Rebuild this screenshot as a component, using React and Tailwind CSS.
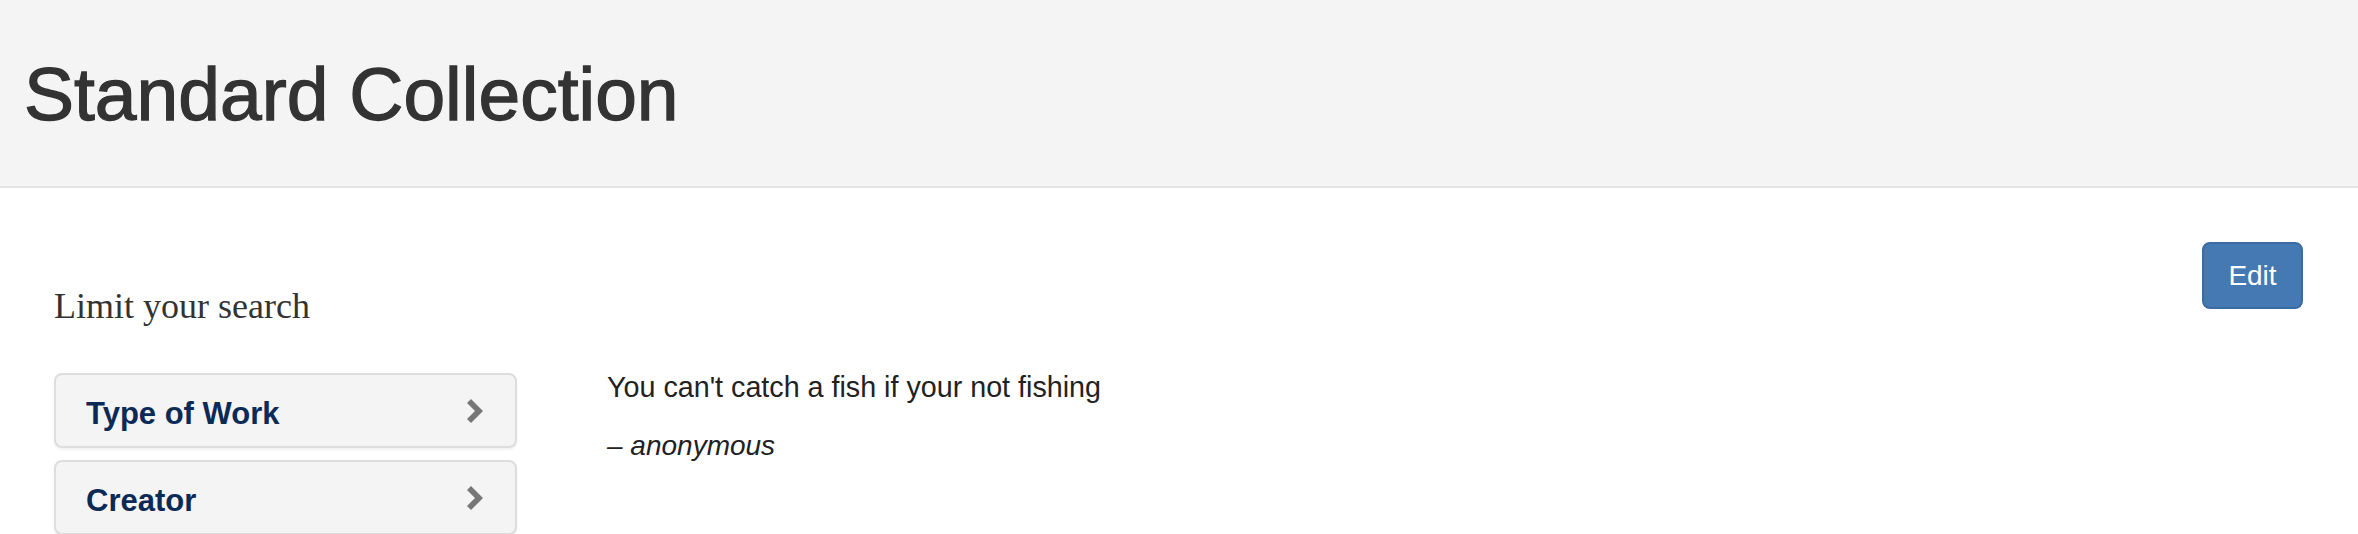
import React from "react";

function Chevron() {
  return (
    <svg width="16" height="24" viewBox="0 0 16 24" className="shrink-0">
      <polygon points="0,4 4,0 16,12 4,24 0,20 8,12" fill="#777777" />
    </svg>
  );
}

function Facet({ label }) {
  return (
    <div className="flex h-[75px] items-center justify-between rounded-[8px] border-2 border-[#dddddd] bg-[#f4f4f4] pl-[30px] pr-[32px] shadow-[0_2px_2px_rgba(0,0,0,0.05)]">
      <span className="pt-[6px] text-[31px] font-bold leading-none text-[#0c2a56]">{label}</span>
      <Chevron />
    </div>
  );
}

export default function App() {
  return (
    <div className="min-h-[534px] bg-white font-['Liberation_Sans',Arial,sans-serif] text-[#333333]">
      <header className="flex h-[188px] items-center border-b-2 border-[#e5e5e5] bg-[#f4f4f4] pl-[24px]">
        <h1 className="pt-[2px] text-[75px] font-normal leading-none text-[#333333] [-webkit-text-stroke:1.3px_#333333]">
          Standard Collection
        </h1>
      </header>
      <div className="flex pl-[54px] pr-[55px]">
        <aside className="w-[463px] shrink-0 pt-[100px]">
          <h2 className="font-['Liberation_Serif','Times_New_Roman',serif] text-[36px] font-normal leading-none text-[#333333]">
            Limit your search
          </h2>
          <div className="mt-[49px] flex flex-col gap-[12px]">
            <Facet label="Type of Work" />
            <Facet label="Creator" />
          </div>
        </aside>
        <main className="ml-[90px] flex-1 pt-[54px]">
          <div className="flex justify-end">
            <button className="flex h-[67px] w-[101px] items-center justify-center rounded-[8px] border-2 border-[#3a6ca3] bg-[#4479b4] text-[28px] leading-none text-white">
              Edit
            </button>
          </div>
          <div className="mt-[58px] text-[28.7px] leading-[40px] text-[#222222]">
            <p className="mb-[19px]">You can't catch a fish if your not fishing</p>
            <p className="text-[28px] italic">– anonymous</p>
          </div>
        </main>
      </div>
    </div>
  );
}
